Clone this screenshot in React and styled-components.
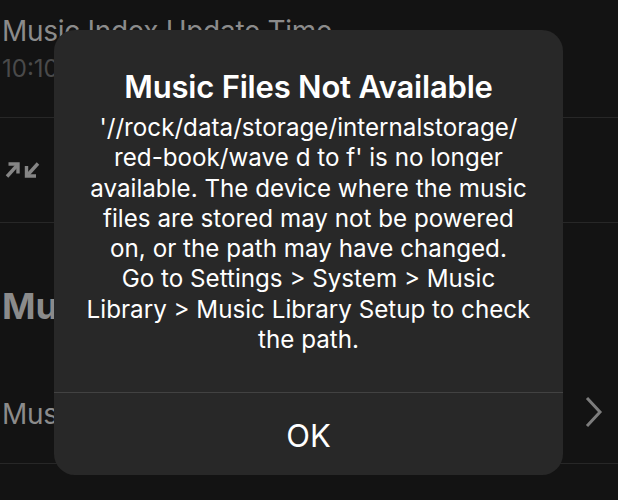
import React from "react";
import styled, { createGlobalStyle } from "styled-components";

const GlobalStyle = createGlobalStyle`
  html, body {
    margin: 0;
    padding: 0;
    background: #131313;
  }
  body {
    font-family: Inter, "Noto Sans", "Liberation Sans", sans-serif;
    -webkit-font-smoothing: antialiased;
  }
`;

const Screen = styled.div`
  position: relative;
  width: 618px;
  height: 500px;
  overflow: hidden;
  background: #131313;
  color: #8b8b8b;
`;

const Row = styled.div`
  display: flex;
  align-items: ${(p) => p.$align || "center"};
  justify-content: space-between;
  height: ${(p) => p.$height}px;
  padding: ${(p) => p.$pad || "0 12px 0 2px"};
  box-sizing: border-box;
  border-bottom: ${(p) => (p.$line ? "1.5px solid #272727" : "none")};
`;

const TextStack = styled.div`
  display: flex;
  flex-direction: column;
  gap: ${(p) => p.$gap || 0}px;
`;

const RowTitle = styled.div`
  font-size: 28px;
  line-height: 34px;
  letter-spacing: -0.3px;
  color: #8b8b8b;
  white-space: nowrap;
`;

const RowSub = styled.div`
  font-size: 24px;
  line-height: 30px;
  color: #4a4a4a;
`;

const SectionHeader = styled.div`
  font-size: 36px;
  font-weight: 700;
  line-height: 42px;
  color: #8b8b8b;
  white-space: nowrap;
`;

const Chevron = styled.svg`
  width: 20px;
  height: 32px;
  display: block;
  margin-top: -1px;
`;

const Dialog = styled.div`
  position: absolute;
  left: 54px;
  top: 30px;
  width: 509px;
  height: 445px;
  border-radius: 21px;
  background: #282828;
  display: flex;
  flex-direction: column;
  overflow: hidden;
`;

const DialogBody = styled.div`
  flex: 1;
  display: flex;
  flex-direction: column;
  align-items: center;
  padding-top: 38px;
  color: #ffffff;
  text-align: center;
`;

const DialogTitle = styled.div`
  font-size: 31px;
  font-weight: 600;
  line-height: 38px;
  letter-spacing: -0.2px;
  margin-bottom: 7px;
`;

const MessageLine = styled.div`
  font-size: 24.2px;
  line-height: 30.3px;
  white-space: nowrap;
`;

const ActionButton = styled.button`
  height: 83px;
  border: none;
  border-top: 1.5px solid #424242;
  background: transparent;
  color: #ffffff;
  font-family: inherit;
  font-size: 31px;
  padding: 3px 0 0;
  cursor: pointer;
`;

const message = [
  "'//rock/data/storage/internalstorage/",
  "red-book/wave d to f' is no longer",
  "available. The device where the music",
  "files are stored may not be powered",
  "on, or the path may have changed.",
  "Go to Settings > System > Music",
  "Library > Music Library Setup to check",
  "the path.",
];

const CollapseIcon = () => (
  <svg width="36" height="18" viewBox="0 0 36 18" fill="none" stroke="#858585" strokeWidth="3.4">
    <path d="M3 15.5 L13 4.5" />
    <path d="M4.5 3 H14 V12.5" />
    <path d="M34 2.5 L24 13.5" />
    <path d="M22.5 5 V15 H32" />
  </svg>
);

export default function App() {
  return (
    <>
      <GlobalStyle />
      <Screen>
        <Row $height={118} $line $align="flex-start" $pad="14px 12px 0 2px">
          <TextStack $gap={6}>
            <RowTitle>Music Index Update Time</RowTitle>
            <RowSub>10:10 AM</RowSub>
          </TextStack>
        </Row>
        <Row $height={105} $line $pad="0 12px 0 4px">
          <CollapseIcon />
        </Row>
        <Row $height={152} $align="flex-start" $pad="62px 12px 0 2px">
          <SectionHeader>Music Library</SectionHeader>
        </Row>
        <Row $height={89} $line $align="flex-start" $pad="22px 14px 0 2px">
          <RowTitle>Music Library Setup</RowTitle>
          <Chevron viewBox="0 0 20 32" fill="none" stroke="#7d7d7d" strokeWidth="3">
            <path d="M3 2 L16 16 L3 30" />
          </Chevron>
        </Row>

        <Dialog role="alertdialog">
          <DialogBody>
            <DialogTitle>Music Files Not Available</DialogTitle>
            {message.map((line) => (
              <MessageLine key={line}>{line}</MessageLine>
            ))}
          </DialogBody>
          <ActionButton>OK</ActionButton>
        </Dialog>
      </Screen>
    </>
  );
}
